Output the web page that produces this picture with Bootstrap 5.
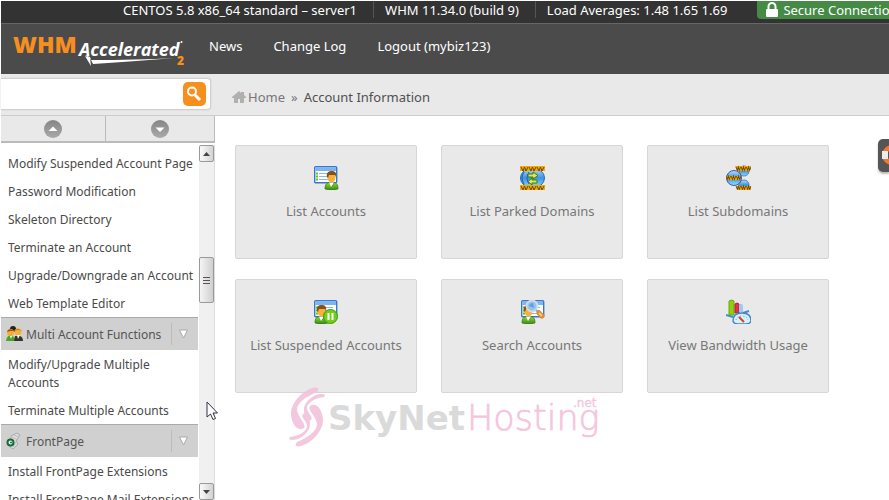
<!DOCTYPE html>
<html lang="en">
<head>
<meta charset="utf-8">
<meta name="viewport" content="width=device-width, initial-scale=1">
<title>WHM Accelerated - Account Information</title>
<link href="https://cdn.jsdelivr.net/npm/bootstrap@5.3.0/dist/css/bootstrap.min.css" rel="stylesheet">
<style>
body{font-family:"Noto Sans","Open Sans",sans-serif;font-size:13px;line-height:18px;color:#666;background:#fff;height:100vh;overflow:hidden;padding:1px 0 0 1px}
svg{display:block;flex-shrink:0}
a{text-decoration:none;color:inherit}
.status-bar{height:23px;background:#333;border-bottom:1px solid #666;color:#fff;padding-left:122px;white-space:nowrap}
.status-bar .stat{height:17px;line-height:18px}
.status-bar .stat + .stat{border-left:1px solid #555;padding-left:11px}
.stat{padding-right:16px}
.secure{margin-left:14px;height:18px;line-height:18px;background:#458a45;padding:0 12px 0 8px;border-bottom-left-radius:4px}
.site-head{height:50px;background:#4b4b4b;color:#fff;padding-left:12px}
.site-head nav{gap:31px;margin-left:24px;padding-bottom:7px}
.tool-bar{height:42px;background:#e9e9e9;border-bottom:1px solid #ccc}
.find{width:210px;height:32px;background:#fff;border:1px solid #d0d0d0;border-left:0;border-radius:0 4px 4px 0;padding-right:4px;margin-bottom:2px;box-shadow:0 0 2px #ccc}
.find input{min-width:0;border:0;outline:0;background:none}
.find button{width:24px;height:24px;border:0;border-radius:5px;background:#f78f1e;padding:0}
.crumbs{margin-left:21px;color:#777;gap:2px}
.crumbs .here{color:#505050}
.side{width:214px;flex-shrink:0;color:#4a4a4a;font-size:12px}
.movers{height:27px;background:#e9e9e9;border-bottom:2px solid #bbb}
.movers button{border:0;border-right:1px solid #bbb;background:none;padding:0}
.movers .move-up{width:105px}
.menu-list{padding-top:6px;width:197px;overflow:hidden}
.menu-list a{display:block;padding:6px 0 4px 7px}
.menu-list a.one{white-space:nowrap}
.group{height:33px;flex-shrink:0;background:#d0d0d0;border:0;border-top:1px solid #aaa;padding:0 9px 0 5px;color:#555;text-align:left;gap:3px}
.group .caption{padding-top:2px}
.group .sep{border-left:1px solid #bbb;height:22px;width:18px}
.scroller{width:16px;margin:2px 0 0 1px;background:#f0f0f0;border-right:1px solid #ddd}
.scroller button{width:15px;height:17px;flex-shrink:0;padding:0;border:1px solid #999;border-radius:2px;background:linear-gradient(90deg,#fafafa,#d2d2d2)}
.scroller .thumb{height:46px;background:linear-gradient(90deg,#f5f5f5,#cfcfcf)}
.above{flex:95 0 0}
.below{flex:180 0 0}
.tiles{padding:29px 20px;gap:20px 24px}
.tile{width:182px;height:114px;background:#e9e9e9;border:1px solid #d6d6d6;border-radius:2px;padding-top:19px;gap:12px;color:#777}
.watermark{left:286px;top:384px;opacity:.9}
.help-tab{right:0;top:139px;width:11px;height:33px;border:0;padding:0;overflow:hidden;background:#555;border-radius:5px 0 0 5px;box-shadow:0 2px 2px #bbb}
.pointer-mark{left:206px;top:401px}
.brand-text{font-family:"Open Sans",sans-serif}
.wm-text{font-family:"DejaVu Sans",sans-serif}
</style>
<script src="https://cdn.jsdelivr.net/npm/bootstrap@5.3.0/dist/js/bootstrap.bundle.min.js"></script>
</head>
<body class="position-relative d-flex flex-column">
<svg width="0" height="0" class="position-absolute" aria-hidden="true">
<defs>
<linearGradient id="sky" x2="0" y2="1"><stop stop-color="#b9dcf7"/><stop offset=".5" stop-color="#3f92df"/><stop offset="1" stop-color="#8fe1fa"/></linearGradient>
<linearGradient id="leaf" x2="0" y2="1"><stop stop-color="#9ad92c"/><stop offset="1" stop-color="#318b16"/></linearGradient>
<linearGradient id="grey" x2="0" y2="1"><stop stop-color="#858585"/><stop offset="1" stop-color="#aaa"/></linearGradient>
<g id="sheet"><rect x=".7" y=".7" width="22" height="16" rx="1" fill="#fff" stroke="#3978c9" stroke-width="1.4"/><path d="M1.4 1.4H22V5H1.4z" fill="#7db5f4"/><path d="M5 7.5h14M5 10.5h14M5 13.5h14" stroke="#8cb8ec"/><path d="M2 7.5h2M2 10.5h2M2 13.5h2" stroke="#65bf19" stroke-width="2"/></g>
<g id="person"><path d="M0 18C0 13 2 12 4 11.500L7 15 9 11.500C12 12 13 14 13 18Q6.500 20 0 18Z" fill="url(#leaf)" stroke="#28751a" stroke-width=".7"/><path d="M4 11.500L6 16 9 11.500z" fill="#fff"/><ellipse cx="6.500" cy="6.500" rx="4" ry="5" fill="#f6b13b"/><path d="M2 6C1 1 4 0 7 0S12 2 11 6L10 4H4L3 7z" fill="#865017"/></g>
<path id="www" d="M0 1L2 5 3.500 1 5 5 7 1M8 1L10 5 11.500 1 13 5 15 1M16 1L18 5 19.500 1 21 5 23 1" fill="none"/>
<g id="swoosh" fill="#f2c3dc"><path d="M32 4C24 1 4 16 5 31C6 41 12 48 18 44C21 40 12 34 11 26C11 18 22 12 31 8Q33 5 32 4Z"/><path d="M39 11C33 7 17 16 18 27C18 33 22 38 25 36C28 33 21 29 21 24C21 18 30 14 38 13Z"/></g>
</defs>
</svg>

<header class="flex-shrink-0">
<div class="status-bar d-flex overflow-hidden">
<span class="stat">CENTOS 5.8 x86_64 standard – server1</span>
<span class="stat">WHM 11.34.0 (build 9)</span>
<span class="stat">Load Averages: 1.48 1.65 1.69</span>
<span class="secure d-flex align-items-center gap-1 flex-grow-1"><svg width="14" height="16" viewBox="0 0 14 16"><path d="M3.500 8V4.500a3.500 3.500 0 0 1 7 0V8" fill="none" stroke="#fff" stroke-width="2"/><rect x="1" y="7" width="12" height="8" rx="1" fill="#fff"/></svg>Secure Connection</span>
</div>
<div class="site-head d-flex align-items-center">
<a href="#" aria-label="WHM Accelerated 2"><svg width="172" height="40" viewBox="0 0 172 40" class="brand-text">
<text x="0" y="24" font-size="23" font-weight="800" fill="#f78f1e">WHM</text>
<text x="66" y="27" font-size="18" font-weight="700" font-style="italic" fill="#fff">Accelerated</text>
<path d="M72 26L78 31 80 35Q126 32 161 29Q124 31 78 31L77 28z" fill="#fff"/><path d="M72 27L78 37 77 29z" fill="#fff"/><circle cx="168.500" cy="13" r="1" fill="#fff"/>
<text x="164" y="36" font-size="12" font-weight="800" fill="#f78f1e">2</text></svg></a>
<nav class="d-flex" aria-label="Main"><a href="#">News</a><a href="#">Change Log</a><a href="#">Logout (mybiz123)</a></nav>
</div>
<div class="tool-bar d-flex align-items-center">
<form class="find d-flex align-items-center"><input class="flex-grow-1" type="text" aria-label="Search"><button type="button" class="d-flex align-items-center justify-content-center" aria-label="Search"><svg width="18" height="18" viewBox="0 0 18 18" fill="none" stroke="#fff"><circle cx="7" cy="6.500" r="4" stroke-width="2"/><path d="M10 10L15 15" stroke-width="3"/></svg></button></form>
<div class="crumbs d-flex align-items-center pt-1"><svg width="14" height="14" viewBox="0 0 14 14"><path d="M0 7L7 1 9 3V2H12V5L14 7V8H12V13H8V9H6V13H2V8H0z" fill="#b0b0b0"/></svg><a href="#">Home</a><span class="px-1">»</span><span class="here">Account Information</span></div>
</div>
</header>

<div class="d-flex flex-grow-1 overflow-hidden">
<aside class="side d-flex flex-column">
<div class="movers d-flex flex-shrink-0">
<button type="button" class="move-up d-flex align-items-center justify-content-center" aria-label="Up"><svg width="18" height="18" viewBox="0 0 18 18"><circle cx="9" cy="9" r="9" fill="url(#grey)"/><path d="M4.500 11L9 6.500 13.500 11z" fill="#fff"/></svg></button>
<button type="button" class="flex-grow-1 d-flex align-items-center justify-content-center" aria-label="Down"><svg width="18" height="18" viewBox="0 0 18 18"><circle cx="9" cy="9" r="9" fill="url(#grey)"/><path d="M4.500 7.500H13.500L9 12z" fill="#fff"/></svg></button>
</div>
<div class="d-flex flex-grow-1 overflow-hidden">
<nav class="menu-list d-flex flex-column" aria-label="Functions">
<a class="one" href="#">Modify Suspended Account Page</a>
<a class="one" href="#">Password Modification</a>
<a class="one" href="#">Skeleton Directory</a>
<a class="one" href="#">Terminate an Account</a>
<a class="one" href="#">Upgrade/Downgrade an Account</a>
<a class="one" href="#">Web Template Editor</a>
<button type="button" class="group d-flex align-items-center"><svg width="17" height="18" viewBox="0 0 17 18"><circle cx="7" cy="4" r="3" fill="#222"/><circle cx="4.500" cy="7.500" r="3.500" fill="#f5ad31"/><circle cx="12" cy="7" r="3.500" fill="#f5b13b"/><path d="M1 7Q2 2 8 6L4 6z" fill="#9a4e12"/><path d="M8 6Q11 1 16 6L12 5z" fill="#d8860f"/><path d="M0 16Q1 10 5 11 9 11 9 16z" fill="#4ba525"/><path d="M8 16L9 11H14Q17 12 17 16z" fill="#333"/><path d="M4 11L5 14 6 11M11 10L12 14 14 10" fill="#fff"/></svg><span class="caption flex-grow-1">Multi Account Functions</span><span class="sep d-flex align-items-center justify-content-end"><svg width="11" height="12" viewBox="0 0 11 12"><path d="M1.500 2H9.500L5.500 10z" fill="#fff" stroke="#aaa"/></svg></span></button>
<a href="#">Modify/Upgrade Multiple Accounts</a>
<a class="one" href="#">Terminate Multiple Accounts</a>
<button type="button" class="group d-flex align-items-center"><svg width="17" height="18" viewBox="0 0 17 18"><path d="M5 4L11 1 14 3 10 9 12 12 7 17 4 15z" fill="#ddd" stroke="#aaa"/><path d="M6 5L12 8M8 3L13 5M7 15L10 10" stroke="#bbb"/><circle cx="4.500" cy="10.500" r="3" fill="#fff" stroke="#126b3a" stroke-width="2"/><circle cx="5" cy="10.500" r="1" fill="#126b3a"/></svg><span class="caption flex-grow-1">FrontPage</span><span class="sep d-flex align-items-center justify-content-end"><svg width="11" height="12" viewBox="0 0 11 12"><path d="M1.500 2H9.500L5.500 10z" fill="#fff" stroke="#aaa"/></svg></span></button>
<a class="one" href="#">Install FrontPage Extensions</a>
<a class="one" href="#">Install FrontPage Mail Extensions</a>
</nav>
<div class="scroller d-flex flex-column">
<button type="button" class="d-flex align-items-center justify-content-center" aria-label="Scroll up"><svg width="7" height="4" viewBox="0 0 7 4"><path d="M0 4L3.500 0 7 4z" fill="#444"/></svg></button>
<div class="above"></div>
<button type="button" class="thumb d-flex align-items-center justify-content-center" aria-label="Scroll"><svg width="7" height="9" viewBox="0 0 7 9"><path d="M0 1.500H7M0 4.500H7M0 7.500H7" stroke="#555"/></svg></button>
<div class="below"></div>
<button type="button" class="d-flex align-items-center justify-content-center" aria-label="Scroll down"><svg width="7" height="4" viewBox="0 0 7 4"><path d="M0 0H7L3.500 4z" fill="#444"/></svg></button>
</div>
</div>
</aside>

<main class="tiles d-flex flex-wrap align-content-start flex-grow-1">
<a href="#" class="tile d-flex flex-column align-items-center"><svg width="25" height="25" viewBox="0 0 25 25"><use href="#sheet" y="1"/><use href="#person" x="11" y="6"/></svg>List Accounts</a>
<a href="#" class="tile d-flex flex-column align-items-center"><svg width="25" height="25" viewBox="0 0 25 25"><ellipse cx="12.500" cy="13" rx="12" ry="10" fill="url(#sky)" stroke="#2368b5"/><path d="M4 7Q0 13 4 19M9 7Q5 13 9 19" fill="none" stroke="#1763ad"/><path d="M0 1H25V6H0zM0 20H25V25H0z" fill="#f5a800"/><g stroke="#6b4a08" stroke-width="1"><use href="#www" x="1" y="1"/><use href="#www" x="1" y="20"/></g><path d="M8 9H13V7L18 10.500 13 14V12H8zM17 15H12V13L8 16.500 12 20V18H17z" fill="#dce85b" stroke="#3e7e12"/></svg>List Parked Domains</a>
<a href="#" class="tile d-flex flex-column align-items-center"><svg width="25" height="25" viewBox="0 0 25 25"><circle cx="18" cy="6" r="5" fill="url(#sky)" stroke="#4883c7"/><circle cx="18" cy="20" r="5" fill="url(#sky)" stroke="#4883c7"/><circle cx="8" cy="13" r="7.500" fill="url(#sky)" stroke="#3b5ba8"/><path d="M9 1H25L24 6H11zM10 21H25V25H12zM0 11H15L14 15H1z" fill="#f0a500"/><g stroke="#6b4a0c" stroke-width="1.200"><use href="#www" transform="translate(10 1) scale(.65 .9)"/><use href="#www" transform="translate(10 20) scale(.65 .9)"/><use href="#www" transform="translate(0 10) scale(.65 .9)"/></g></svg>List Subdomains</a>
<a href="#" class="tile d-flex flex-column align-items-center"><svg width="25" height="25" viewBox="0 0 25 25"><use href="#sheet" y="1"/><use href="#person" x="1" y="6"/><circle cx="16.500" cy="17.500" r="7" fill="#72cf16" stroke="#3a9915"/><path d="M14.500 14V21M18.500 14V21" stroke="#fff" stroke-width="2"/></svg>List Suspended Accounts</a>
<a href="#" class="tile d-flex flex-column align-items-center"><svg width="25" height="25" viewBox="0 0 25 25"><use href="#sheet" x="1" y="1"/><use href="#person" x="2" y="6"/><circle cx="12" cy="7" r="5.500" fill="#92c4f0" stroke="#d3dbe4" stroke-width="2"/><path d="M9 7Q10 4 13 4L14 9z" fill="#689cda"/><path d="M16 11L18 13" stroke="#aaa" stroke-width="2"/><path d="M19 14L22 17" stroke="#e08a35" stroke-width="5" stroke-linecap="round"/><path d="M19 14L22 17" stroke="#ffc680" stroke-width="2"/></svg>Search Accounts</a>
<a href="#" class="tile d-flex flex-column align-items-center"><svg width="25" height="25" viewBox="0 0 25 25"><path d="M3 2Q6 0 8 2V16H3z" fill="#8ed010" stroke="#69a80c"/><path d="M9 5Q11 3 13 5V14H9z" fill="#e93240" stroke="#b71e31"/><path d="M13 6Q16 3 17 7V13H13z" fill="#9acbf7"/><path d="M0 16L7 18M17 14L23 12" stroke="#478bc9" stroke-width="2"/><path d="M7 22Q7 14 16 14T25 22Q24 25 20 25H12Q8 25 7 22z" fill="#d6effb" stroke="#3e86cc" stroke-width="1.400"/><path d="M10 21Q11 17 16 17T22 21" fill="none" stroke="#6a9ac1" stroke-dasharray="1 2"/><path d="M13 18L18 23" stroke="#d84422" stroke-width="2"/></svg>View Bandwidth Usage</a>
</main>
</div>

<div class="watermark position-absolute pe-none"><svg width="320" height="66" viewBox="0 0 320 66" class="wm-text">
<use href="#swoosh"/><use href="#swoosh" transform="rotate(180 21 33)"/>
<text x="42" y="46" font-size="34" font-weight="700" fill="#d7d7d7">SkyNet</text>
<text x="181" y="46" font-size="35" font-weight="200" fill="#f3bfd9" stroke="#f3bfd9" stroke-width=".7">Hosting</text>
<text x="287" y="23" font-size="12" fill="#f3bfd9" stroke="#f3bfd9" stroke-width=".3">.net</text></svg></div>
<button type="button" class="help-tab position-absolute" aria-label="Help"><svg width="24" height="33" viewBox="0 0 24 33"><circle cx="14" cy="16" r="7.500" fill="none" stroke="#f4772e" stroke-width="5"/><path d="M4 12H10V20H4z" fill="#e9eef2"/></svg></button>
<svg class="pointer-mark position-absolute pe-none" width="13" height="20" viewBox="0 0 13 20"><path d="M1 1V16L4.500 13 7 18.500 9.500 17.500 7 12H11.500z" fill="#fff" stroke="#334" stroke-width="1"/></svg>
</body>
</html>
